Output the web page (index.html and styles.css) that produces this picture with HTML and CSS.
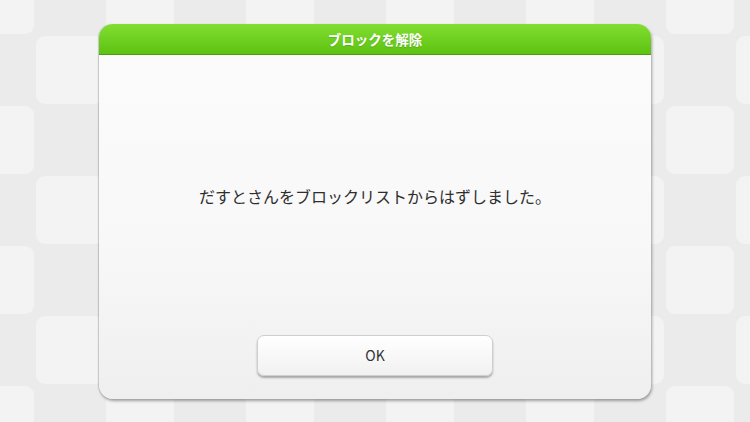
FILE: index.html
```html
<!DOCTYPE html>
<html lang="ja">
<head>
<meta charset="UTF-8">
<meta name="viewport" content="width=device-width, initial-scale=1.0">
<title>ブロックを解除</title>
<link rel="stylesheet" href="styles.css">
</head>
<body>
  <div class="dialog">
    <div class="dialog-header">ブロックを解除</div>
    <div class="dialog-body">
      <div class="message">だすとさんをブロックリストからはずしました。</div>
      <div class="actions">
        <button class="ok-button" type="button">OK</button>
      </div>
    </div>
  </div>
</body>
</html>
```

FILE: styles.css
```css
body, html {
  margin: 0;
  padding: 0;
  height: 100%;
  font-family: "Noto Sans CJK JP", "Noto Sans", sans-serif;
}

body {
  display: flex;
  justify-content: center;
  align-items: center;
  background-color: #ebebeb;
  background-image: url("data:image/svg+xml,%3Csvg xmlns='http://www.w3.org/2000/svg' width='140' height='140'%3E%3Crect x='1' y='1' width='68' height='68' rx='9' fill='%23f3f3f3'/%3E%3Crect x='71' y='71' width='68' height='68' rx='9' fill='%23f3f3f3'/%3E%3C/svg%3E");
  background-position: 35px 35px;
}

.dialog {
  width: 552px;
  height: 375px;
  display: flex;
  flex-direction: column;
  border-radius: 14px;
  box-shadow: 1px 2px 3px rgba(0, 0, 0, 0.35), -1px 0 1px rgba(0, 0, 0, 0.15);
  overflow: hidden;
}

.dialog-header {
  height: 30px;
  line-height: 31px;
  text-align: center;
  color: #fff;
  font-size: 13.5px;
  font-weight: bold;
  background: linear-gradient(#82de31, #5dc212);
  border-bottom: 1px solid #4b9c10;
  text-shadow: 0 1px 1px rgba(0, 0, 0, 0.15);
}

.dialog-body {
  flex: 1;
  display: flex;
  flex-direction: column;
  background: linear-gradient(#fbfbfb 0%, #f8f8f8 55%, #efefef 100%);
}

.message {
  flex: 1;
  display: flex;
  justify-content: center;
  align-items: center;
  font-size: 16px;
  color: #2e2e2e;
  padding-top: 2px;
}

.actions {
  display: flex;
  justify-content: center;
  padding-bottom: 23px;
}

.ok-button {
  width: 236px;
  height: 41px;
  border: 1px solid #cfcfcf;
  border-radius: 7px;
  background: linear-gradient(#ffffff, #f1f1f1);
  box-shadow: 0 2px 2px rgba(0, 0, 0, 0.3);
  font-family: "Noto Sans CJK JP", "Noto Sans", sans-serif;
  font-size: 14px;
  color: #333;
  padding: 0;
}
```
